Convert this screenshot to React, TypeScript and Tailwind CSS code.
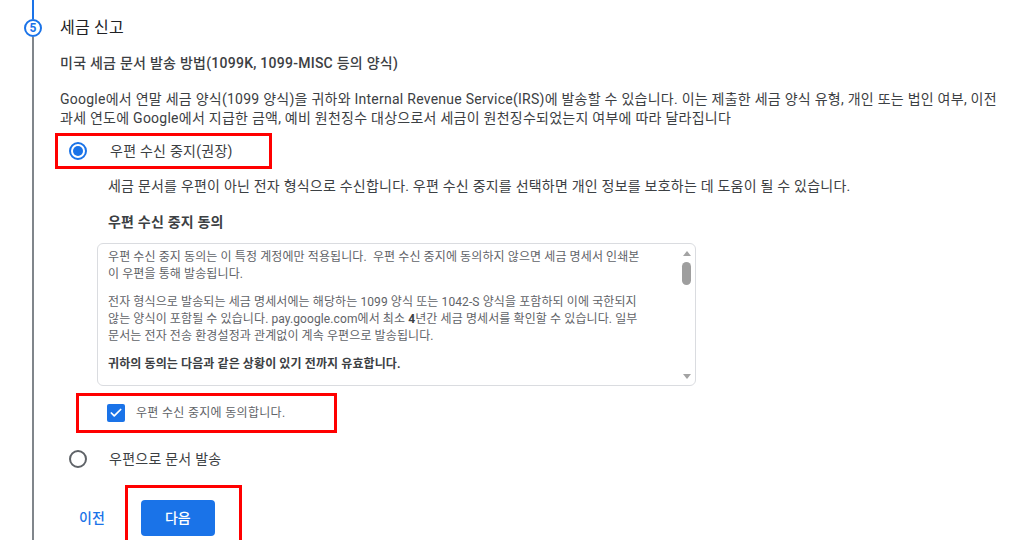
import { Check } from "lucide-react";

const FONT = "font-['Roboto','Noto_Sans_CJK_KR',sans-serif]";

function Stepper() {
  return (
    <div className="w-[60px] shrink-0 pl-[24px]">
      <div className="flex h-full w-[18px] flex-col items-center">
        <div className="h-[19px] w-[2px] bg-[#1a73e8]" />
        <div className="flex h-[18px] w-[18px] items-center justify-center rounded-full border-2 border-[#1a73e8] text-[12px] font-bold leading-none text-[#1a73e8]">
          5
        </div>
        <div className="w-[2px] flex-1 bg-[#80868b]" />
      </div>
    </div>
  );
}

function Radio({ checked }: { checked?: boolean }) {
  return (
    <span
      className={`flex h-[18px] w-[18px] shrink-0 items-center justify-center rounded-full border-2 ${
        checked ? "border-[#1a73e8]" : "border-[#5f6368]"
      }`}
    >
      {checked && <span className="h-[10px] w-[10px] rounded-full bg-[#1a73e8]" />}
    </span>
  );
}

function ScrollBar() {
  return (
    <div className="relative w-[15px] shrink-0">
      <div className="absolute left-[3px] top-[7px] h-0 w-0 border-x-[4px] border-b-[5px] border-x-transparent border-b-[#a3a3a3]" />
      <div className="absolute left-[2px] top-[18px] h-[23px] w-[9px] rounded-full bg-[#9e9e9e]" />
      <div className="absolute bottom-[6px] left-[3px] h-0 w-0 border-x-[4px] border-t-[5px] border-x-transparent border-t-[#a3a3a3]" />
    </div>
  );
}

export default function App() {
  return (
    <div className={`flex h-[540px] w-[1018px] overflow-hidden bg-white ${FONT}`}>
      <Stepper />

      <div className="flex flex-1 flex-col pt-[16px] text-[#3c4043] [&>*]:shrink-0">
        <h2 className="text-[16px] leading-[24px] tracking-[0.2px] text-[#202124]">세금 신고</h2>

        <h3 className="mt-[13px] text-[14px] font-medium leading-[20px] tracking-[0.25px] text-[#3c4043]">
          미국 세금 문서 발송 방법(1099K, 1099-MISC 등의 양식)
        </h3>

        <p className="mt-[17px] whitespace-nowrap text-[14px] leading-[19px] tracking-[0.25px]">
          Google에서 연말 세금 양식(1099 양식)을 귀하와 Internal Revenue Service(IRS)에 발송할 수 있습니다. 이는 제출한 세금 양식 유형, 개인 또는 법인 여부, 이전
          <br />
          과세 연도에 Google에서 지급한 금액, 예비 원천징수 대상으로서 세금이 원천징수되었는지 여부에 따라 달라집니다
        </p>

        {/* 우편 수신 중지 */}
        <div className="ml-[-5px] mt-[5px] flex h-[36px] w-[217px] items-center border-[3px] border-[#ff0000] pl-[11px]">
          <Radio checked />
          <span className="ml-[23px] whitespace-nowrap text-[14px] tracking-[0.25px] text-[#3c4043]">
            우편 수신 중지(권장)
          </span>
        </div>

        <div className="ml-[48px] flex flex-col">
          <p className="mt-[7px] whitespace-nowrap text-[14px] leading-[20px] tracking-[0.22px]">
            세금 문서를 우편이 아닌 전자 형식으로 수신합니다. 우편 수신 중지를 선택하면 개인 정보를 보호하는 데 도움이 될 수 있습니다.
          </p>
          <h4 className="mt-[16px] text-[14px] font-bold leading-[20px] tracking-[0.2px] text-[#3c4043]">
            우편 수신 중지 동의
          </h4>
        </div>

        <div className="ml-[37px] mt-[11px] flex h-[143px] w-[599px] overflow-hidden rounded-[6px] border border-[#dadce0]">
          <div className="flex-1 overflow-hidden pl-[10px] pt-[5px] text-[12px] leading-[17px] tracking-[0.1px] text-[#5f6368]">
            <p className="whitespace-nowrap">
              우편 수신 중지 동의는 이 특정 계정에만 적용됩니다.&nbsp; 우편 수신 중지에 동의하지 않으면 세금 명세서 인쇄본
              <br />이 우편을 통해 발송됩니다.
            </p>
            <p className="mt-[11px] whitespace-nowrap">
              전자 형식으로 발송되는 세금 명세서에는 해당하는 1099 양식 또는 1042-S 양식을 포함하되 이에 국한되지
              <br />
              않는 양식이 포함될 수 있습니다. pay.google.com에서 최소 <b className="text-[#3c4043]">4</b>년간 세금 명세서를 확인할 수 있습니다. 일부
              <br />
              문서는 전자 전송 환경설정과 관계없이 계속 우편으로 발송됩니다.
            </p>
            <p className="mt-[11px] whitespace-nowrap font-bold text-[#3c4043]">
              귀하의 동의는 다음과 같은 상황이 있기 전까지 유효합니다.
            </p>
          </div>
          <ScrollBar />
        </div>

        {/* 동의 체크박스 */}
        <div className="ml-[16px] mt-[7px] flex h-[40px] w-[261px] items-center border-[3px] border-[#ff0000] pl-[28px]">
          <span className="flex h-[18px] w-[18px] items-center justify-center rounded-[2px] bg-[#1a73e8]">
            <Check size={14} strokeWidth={3} className="text-white" />
          </span>
          <span className="ml-[11px] whitespace-nowrap text-[12px] tracking-[0.3px] text-[#5f6368]">
            우편 수신 중지에 동의합니다.
          </span>
        </div>

        <div className="ml-[9px] mt-[16px] flex h-[20px] items-center">
          <Radio />
          <span className="ml-[22px] whitespace-nowrap text-[14px] tracking-[0.25px] text-[#3c4043]">
            우편으로 문서 발송
          </span>
        </div>

        <div className="mt-[16px] flex items-center">
          <button className="ml-[19px] text-[14px] font-medium text-[#1a73e8]">이전</button>
          <div className="ml-[20px] border-[3px] border-[#ff0000] px-[13px] py-[12px] pr-[24px]">
            <button className="h-[36px] w-[74px] rounded-[4px] bg-[#1a73e8] text-[14px] font-medium text-white">
              다음
            </button>
          </div>
        </div>
      </div>
    </div>
  );
}
